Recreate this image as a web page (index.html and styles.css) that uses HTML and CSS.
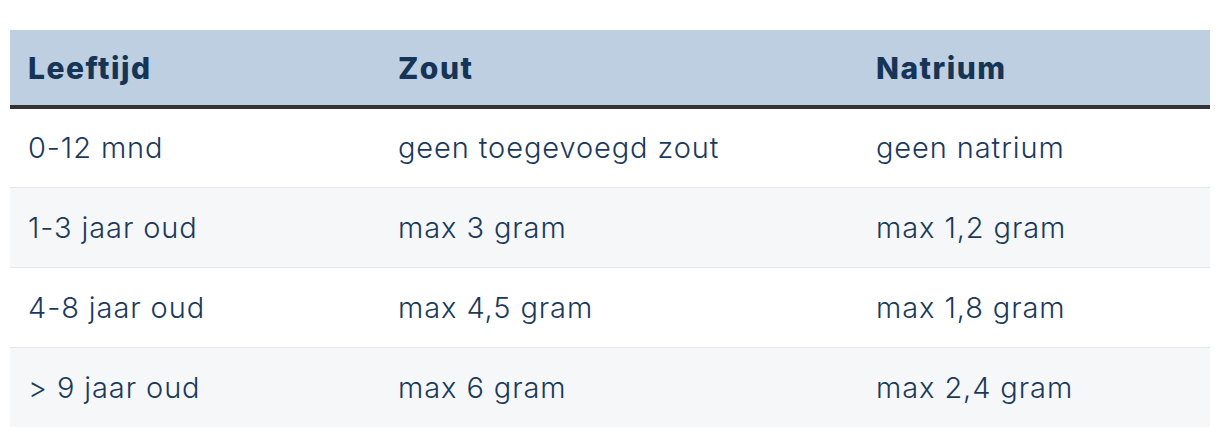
FILE: index.html
```html
<!DOCTYPE html>
<html lang="nl">
<head>
<meta charset="utf-8">
<title>Zout tabel</title>
<link rel="stylesheet" href="styles.css">
</head>
<body>
<div class="wrap">
<table class="salt">
  <colgroup>
    <col class="c1"><col class="c2"><col class="c3">
  </colgroup>
  <thead>
    <tr><th>Leeftijd</th><th>Zout</th><th>Natrium</th></tr>
  </thead>
  <tbody>
    <tr><td>0-12 mnd</td><td>geen toegevoegd zout</td><td>geen natrium</td></tr>
    <tr><td>1-3 jaar oud</td><td>max 3 gram</td><td>max 1,2 gram</td></tr>
    <tr><td>4-8 jaar oud</td><td>max 4,5 gram</td><td>max 1,8 gram</td></tr>
    <tr><td>&gt; 9 jaar oud</td><td>max 6 gram</td><td>max 2,4 gram</td></tr>
  </tbody>
</table>
</div>
</body>
</html>
```
FILE: styles.css
```css
html, body { margin: 0; padding: 0; background: #ffffff; }
.wrap { padding: 30px 10px 0 10px; }
.salt {
  width: 1200px;
  border-collapse: collapse;
  font-family: Inter, "Liberation Sans", sans-serif;
  color: #1a3a5c;
  table-layout: fixed;
}
.c1 { width: 370px; }
.c2 { width: 478px; }
.c3 { width: 352px; }
.salt th {
  background: #bdcfe0;
  text-align: left;
  font-weight: 800;
  font-size: 30px;
  letter-spacing: 1.5px;
  color: #153456;
  height: 77px;
  padding: 0 0 0 18px;
  border-bottom: 4px solid #333333;
  box-sizing: border-box;
}
.salt td {
  font-size: 29px;
  font-weight: 300;
  letter-spacing: 0.9px;
  height: 80px;
  padding: 0 0 0 18px;
  border-top: 1px solid #e3e5e8;
  box-sizing: border-box;
}
.salt tbody tr:first-child td { border-top: none; }
.salt tbody tr:nth-child(even) td { background: #f6f7f9; }
```
